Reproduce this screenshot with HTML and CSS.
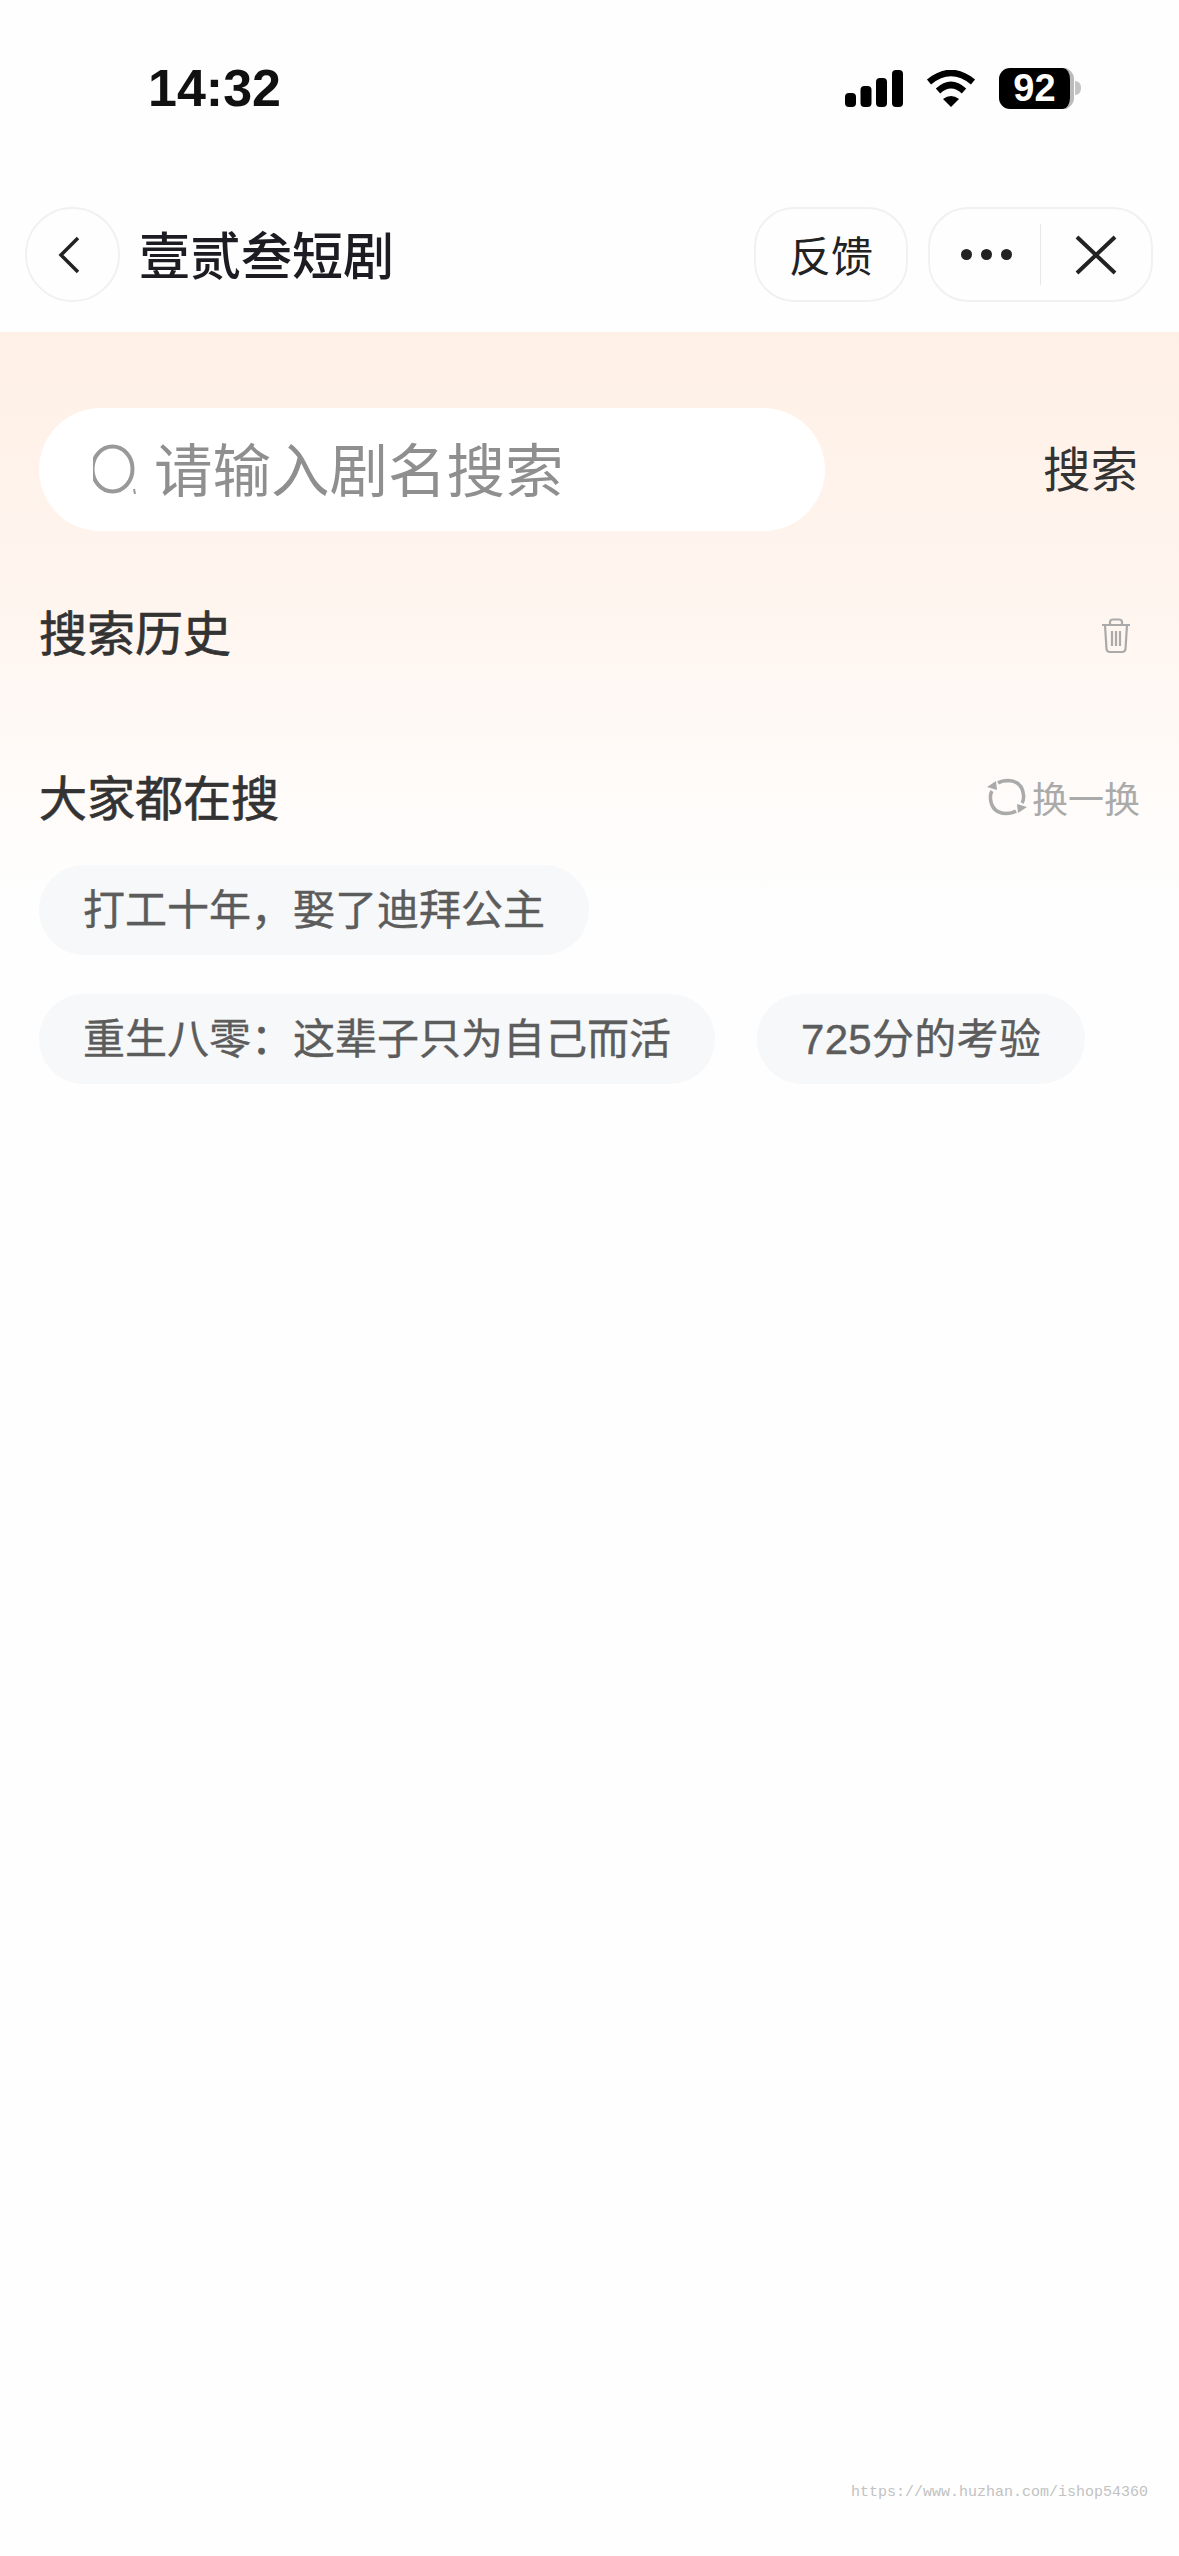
FILE: index.html
```html
<!DOCTYPE html>
<html lang="zh-CN">
<head>
    <meta charset="UTF-8">
    <meta name="viewport" content="width=device-width, initial-scale=1.0">
    <title>壹贰叁短剧</title>
    <link rel="stylesheet" href="styles.css">
</head>
<body>

    <!-- 状态栏 -->
    <div class="status">
        <span class="time">14:32</span>
        <div class="status-icons">
            <svg class="signal" width="58" height="37" viewBox="0 0 58 37">
                <rect x="0" y="23" width="11" height="14" rx="4"/>
                <rect x="15.500" y="16" width="11" height="21" rx="4"/>
                <rect x="31" y="8" width="11" height="29" rx="4"/>
                <rect x="47" y="0" width="11" height="37" rx="4"/>
            </svg>
            <svg class="wifi" width="50" height="37" viewBox="0 0 50 37">
                <path d="M3 12 Q25 -6 47 12" fill="none" stroke="#000" stroke-width="6.500"/>
                <path d="M12 21 Q25 9 38 21" fill="none" stroke="#000" stroke-width="6.500"/>
                <path d="M17 29 Q25 23 33 29 L25 37 Z"/>
            </svg>
            <div class="battery">
                <div class="battery-body">
                    <span>92</span>
                </div>
                <div class="battery-nub"></div>
            </div>
        </div>
    </div>

    <!-- 导航栏 -->
    <div class="nav">
        <div class="back-btn">
            <svg width="24" height="40" viewBox="0 0 24 40">
                <path d="M21 3 L4 20 L21 37" fill="none" stroke="#222" stroke-width="3.500"/>
            </svg>
        </div>
        <h1 class="nav-title">壹贰叁短剧</h1>
        <div class="feedback-btn">反馈</div>
        <div class="capsule">
            <div class="capsule-more">
                <i></i><i></i><i></i>
            </div>
            <div class="capsule-close">
                <svg width="42" height="40" viewBox="0 0 42 40">
                    <path d="M2 2 L40 38 M40 2 L2 38" fill="none" stroke="#222" stroke-width="4"/>
                </svg>
            </div>
        </div>
    </div>

    <div class="panel">
        <!-- 搜索框 -->
        <div class="search-row">
            <div class="search-box">
                <svg class="search-icon" width="44" height="54" viewBox="0 0 44 54">
                    <ellipse cx="19.500" cy="26" rx="20" ry="22.500" fill="none" stroke="#999" stroke-width="4"/>
                    <path d="M41 46 L42 51" fill="none" stroke="#999" stroke-width="2"/>
                </svg>
                <span class="search-hint">请输入剧名搜索</span>
            </div>
            <span class="search-btn">搜索</span>
        </div>

        <!-- 搜索历史 -->
        <div class="section-head history-head">
            <h2>搜索历史</h2>
            <svg class="trash" width="30" height="36" viewBox="0 0 30 36">
                <path d="M1 7 H29 M9 7 V4 Q9 1.500 12 1.500 H18 Q21 1.500 21 4 V7 M4 7 L5.500 31 Q5.800 34 9 34 H21 Q24.200 34 24.500 31 L26 7 M11 13 V28 M15 13 V28 M19 13 V28" fill="none" stroke="#aaa" stroke-width="2.200"/>
            </svg>
        </div>

        <!-- 大家都在搜 -->
        <div class="section-head hot-head">
            <h2>大家都在搜</h2>
            <div class="refresh">
                <svg width="40" height="38" viewBox="0 0 40 38">
                    <path d="M11 5 Q15 2.500 21 2.500 Q35 3 36.500 17 Q37 22 35 25" fill="none" stroke="#aaa" stroke-width="3.500"/>
                    <path d="M29 33 Q25 35.500 19 35.500 Q5 35 3.500 21 Q3 16 5 13" fill="none" stroke="#aaa" stroke-width="3.500"/>
                    <path d="M0 9 L10 12 L9 3 Z M40 29 L30 26 L31 35 Z" fill="#aaa"/>
                </svg>
                <span>换一换</span>
            </div>
        </div>
        <div class="chips">
            <span class="chip">打工十年，娶了迪拜公主</span>
            <span class="chip">重生八零：这辈子只为自己而活</span>
            <span class="chip chip-num">725分的考验</span>
        </div>
    </div>

    <div class="watermark">https://www.huzhan.com/ishop54360</div>

</body>
</html>
```

FILE: styles.css
```css
body {
    margin: 0;
    padding: 0;
    height: 2556px;
    position: relative;
    overflow: hidden;
    background-color: #fefefe;
    font-family: "Liberation Sans", "Noto Sans CJK SC", sans-serif;
    color: #222;
}

h1, h2 {
    margin: 0;
}

/* status bar */
.status {
    display: flex;
    justify-content: space-between;
    align-items: center;
    height: 56px;
    margin-top: 60px;
    padding: 0 98px 0 148px;
}

.time {
    font-size: 52px;
    font-weight: bold;
    color: #111;
}

.status-icons {
    display: flex;
    align-items: center;
}

.wifi {
    margin-left: 23px;
}

.battery {
    display: flex;
    align-items: center;
    margin-left: 23px;
}

.battery-body {
    display: flex;
    align-items: center;
    justify-content: center;
    width: 71px;
    height: 41px;
    background-color: #000;
    border-right: 4px solid #bbb;
    border-radius: 11px;
    color: #fff;
    font-size: 38px;
    font-weight: bold;
}

.battery-nub {
    width: 6px;
    height: 14px;
    margin-left: 1px;
    background-color: #c4c4c4;
    border-radius: 0 7px 7px 0;
}

/* nav bar */
.nav {
    display: flex;
    align-items: center;
    height: 95px;
    margin-top: 91px;
    padding: 0 26px 0 25px;
}

.back-btn {
    display: flex;
    align-items: center;
    justify-content: center;
    box-sizing: border-box;
    width: 95px;
    height: 95px;
    padding-right: 7px;
    border: 2px solid #f1f1f1;
    border-radius: 50%;
}

.nav-title {
    flex: 1;
    margin-left: 19px;
    padding-bottom: 3px;
    font-size: 51px;
    font-weight: 500;
    color: #1c1c22;
}

.feedback-btn {
    display: flex;
    align-items: center;
    justify-content: center;
    box-sizing: border-box;
    width: 154px;
    height: 95px;
    padding-bottom: 3px;
    border: 2px solid #f1f1f1;
    border-radius: 40px;
    font-size: 42px;
}

.capsule {
    display: flex;
    align-items: center;
    box-sizing: border-box;
    width: 225px;
    height: 95px;
    margin-left: 20px;
    border: 2px solid #f1f1f1;
    border-radius: 40px;
}

.capsule-more {
    display: flex;
    justify-content: center;
    align-items: center;
    gap: 9px;
    box-sizing: border-box;
    width: 111px;
    height: 61px;
    padding-left: 3px;
    border-right: 1px solid #e8e8e8;
}

.capsule-more i {
    width: 11px;
    height: 11px;
    background-color: #222;
    border-radius: 50%;
}

.capsule-close {
    flex: 1;
    display: flex;
    justify-content: center;
    align-items: center;
}

/* orange gradient area */
.panel {
    margin-top: 30px;
    padding: 76px 42px 0 39px;
    height: 600px;
    background: linear-gradient(180deg, #fef0e6 0%, #fff5ef 40%, #fffaf7 62%, #fefefe 84%);
}

.search-row {
    display: flex;
    justify-content: space-between;
    align-items: center;
}

.search-box {
    display: flex;
    align-items: center;
    width: 786px;
    height: 123px;
    background-color: #fff;
    border-radius: 62px;
    padding-left: 54px;
    box-sizing: border-box;
}

.search-hint {
    margin-left: 17px;
    padding-bottom: 7px;
    font-size: 58.500px;
    color: #8f8f8f;
}

.search-btn {
    margin-right: -1px;
    padding-bottom: 7px;
    font-size: 47.500px;
    color: #333;
}

.section-head {
    display: flex;
    justify-content: space-between;
    align-items: center;
    height: 60px;
}

.section-head h2 {
    padding-bottom: 6px;
    font-size: 48px;
    font-weight: 400;
    -webkit-text-stroke: 0.7px #333;
    color: #333;
}

.history-head {
    margin-top: 72px;
    padding-right: 6px;
}

.trash {
    margin-top: 5px;
}

.hot-head {
    margin-top: 105px;
    margin-right: -3px;
}

.refresh {
    display: flex;
    align-items: center;
    gap: 5px;
    padding-bottom: 2px;
    font-size: 36px;
    color: #aaa;
}

.chips {
    display: flex;
    flex-wrap: wrap;
    gap: 39px 42px;
    margin-top: 37px;
}

.chip {
    height: 90px;
    line-height: 92px;
    padding: 0 44px;
    background-color: #f7f8f9;
    border-radius: 45px;
    font-size: 42px;
    -webkit-text-stroke: 0.4px #5c5c5c;
    color: #5c5c5c;
}

.chip-num {
    letter-spacing: 0.3px;
}

/* watermark over the page */
.watermark {
    position: absolute;
    right: 31px;
    top: 2484px;
    font-family: "Liberation Mono", monospace;
    font-size: 15px;
    color: #c2c2c2;
}
```
